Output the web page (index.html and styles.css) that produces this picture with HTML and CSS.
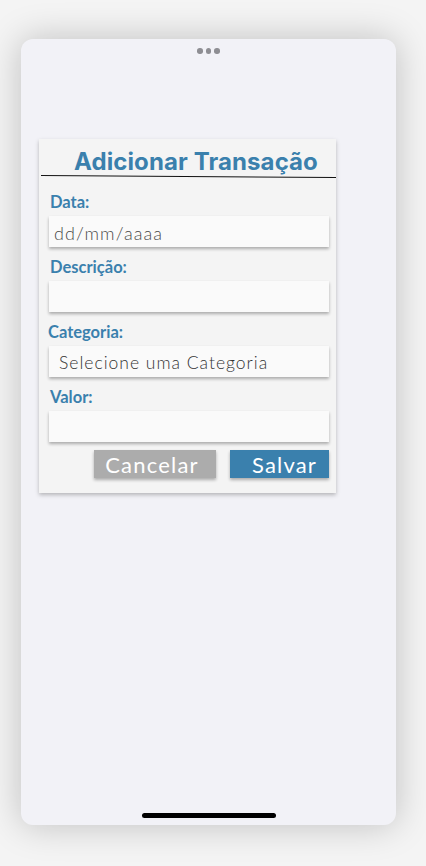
FILE: index.html
```html
<!DOCTYPE html>
<html lang="pt-BR">
<head>
<meta charset="utf-8">
<title>Adicionar Transação</title>
<link rel="stylesheet" href="styles.css">
</head>
<body>
<div class="phone">
  <div class="dots"><span></span><span></span><span></span></div>
  <form class="card">
    <h1 class="title">Adicionar Transação</h1>
    <div class="rule"></div>
    <div class="fields">
      <div class="field">
        <label class="label">Data:</label>
        <div class="input"><span class="placeholder">dd/mm/aaaa</span></div>
      </div>
      <div class="field">
        <label class="label">Descrição:</label>
        <div class="input"></div>
      </div>
      <div class="field">
        <label class="label label-cat">Categoria:</label>
        <div class="input select"><span class="option">Selecione uma Categoria</span></div>
      </div>
      <div class="field">
        <label class="label">Valor:</label>
        <div class="input"></div>
      </div>
    </div>
    <div class="actions">
      <button type="button" class="btn btn-cancel">Cancelar</button>
      <button type="button" class="btn btn-save">Salvar</button>
    </div>
  </form>
  <div class="spacer"></div>
  <div class="home"></div>
</div>
</body>
</html>
```
FILE: styles.css
```css
html, body {
  margin: 0;
  padding: 0;
}
body {
  background: #f4f4f4;
  width: 426px;
  height: 866px;
  overflow: hidden;
  font-family: Lato, "Noto Sans", sans-serif;
}
.phone {
  margin: 39px 0 0 21px;
  width: 375px;
  height: 786px;
  background: #f2f2f7;
  border-radius: 12px;
  box-shadow: 0 0 36px rgba(0, 0, 0, 0.22);
  display: flex;
  flex-direction: column;
  box-sizing: border-box;
}
.dots {
  display: flex;
  justify-content: center;
  gap: 3px;
  padding-top: 9px;
}
.dots span {
  width: 5.5px;
  height: 5.5px;
  border-radius: 50%;
  background: #8e8e93;
}
.card {
  margin: 85px 0 0 18px;
  width: 297px;
  background: #f4f4f4;
  box-shadow: 0 2px 4px rgba(0, 0, 0, 0.25);
  padding: 8px 7px 15px 0;
  box-sizing: border-box;
}
.title {
  margin: 0;
  padding-left: 35px;
  font-family: Inter, "Liberation Sans", sans-serif;
  font-weight: 700;
  font-size: 24px;
  line-height: 29px;
  color: #3a80ad;
  letter-spacing: 0.1px;
}
.rule {
  margin: 0 -7px 0 2px;
  height: 1px;
  background: #111;
  transform: rotate(0.35deg);
}
.fields {
  display: flex;
  flex-direction: column;
  gap: 9px;
  padding: 14px 0 0 10px;
}
.field {
  display: flex;
  flex-direction: column;
  gap: 5px;
}
.label {
  font-weight: 700;
  font-size: 16.5px;
  line-height: 20px;
  color: #3a80ad;
  padding-left: 1px;
  padding-top: 1px;
  margin-bottom: -1px;
}
.label-cat {
  padding-left: 0;
  margin-left: -1px;
}
.input {
  height: 31px;
  background: #fafafa;
  box-shadow: 0 2px 3px rgba(0, 0, 0, 0.3);
  display: flex;
  align-items: center;
  box-sizing: border-box;
}
.placeholder {
  font-weight: 300;
  font-size: 18px;
  color: #4a4a4a;
  padding-left: 5px;
  padding-top: 3px;
  letter-spacing: 1.1px;
}
.option {
  font-weight: 300;
  font-size: 17.5px;
  color: #333;
  padding-left: 10px;
  padding-top: 3px;
  letter-spacing: 1px;
}
.actions {
  display: flex;
  justify-content: flex-end;
  gap: 14px;
  padding-top: 8px;
}
.btn {
  height: 28px;
  border: none;
  margin: 0;
  padding: 2px 0 0;
  font-family: Lato, "Noto Sans", sans-serif;
  font-size: 22px;
  line-height: 26px;
  color: #fff;
  box-shadow: 0 2px 3px rgba(0, 0, 0, 0.3);
  letter-spacing: 1.2px;
}
.btn-cancel {
  width: 122px;
  background: #acacac;
  padding-right: 6px;
}
.btn-save {
  width: 99px;
  background: #3a80ad;
  padding-left: 10px;
}
.spacer {
  flex: 1;
}
.home {
  align-self: center;
  width: 134px;
  height: 5px;
  border-radius: 3px;
  background: #000;
  margin-bottom: 7px;
}
```
